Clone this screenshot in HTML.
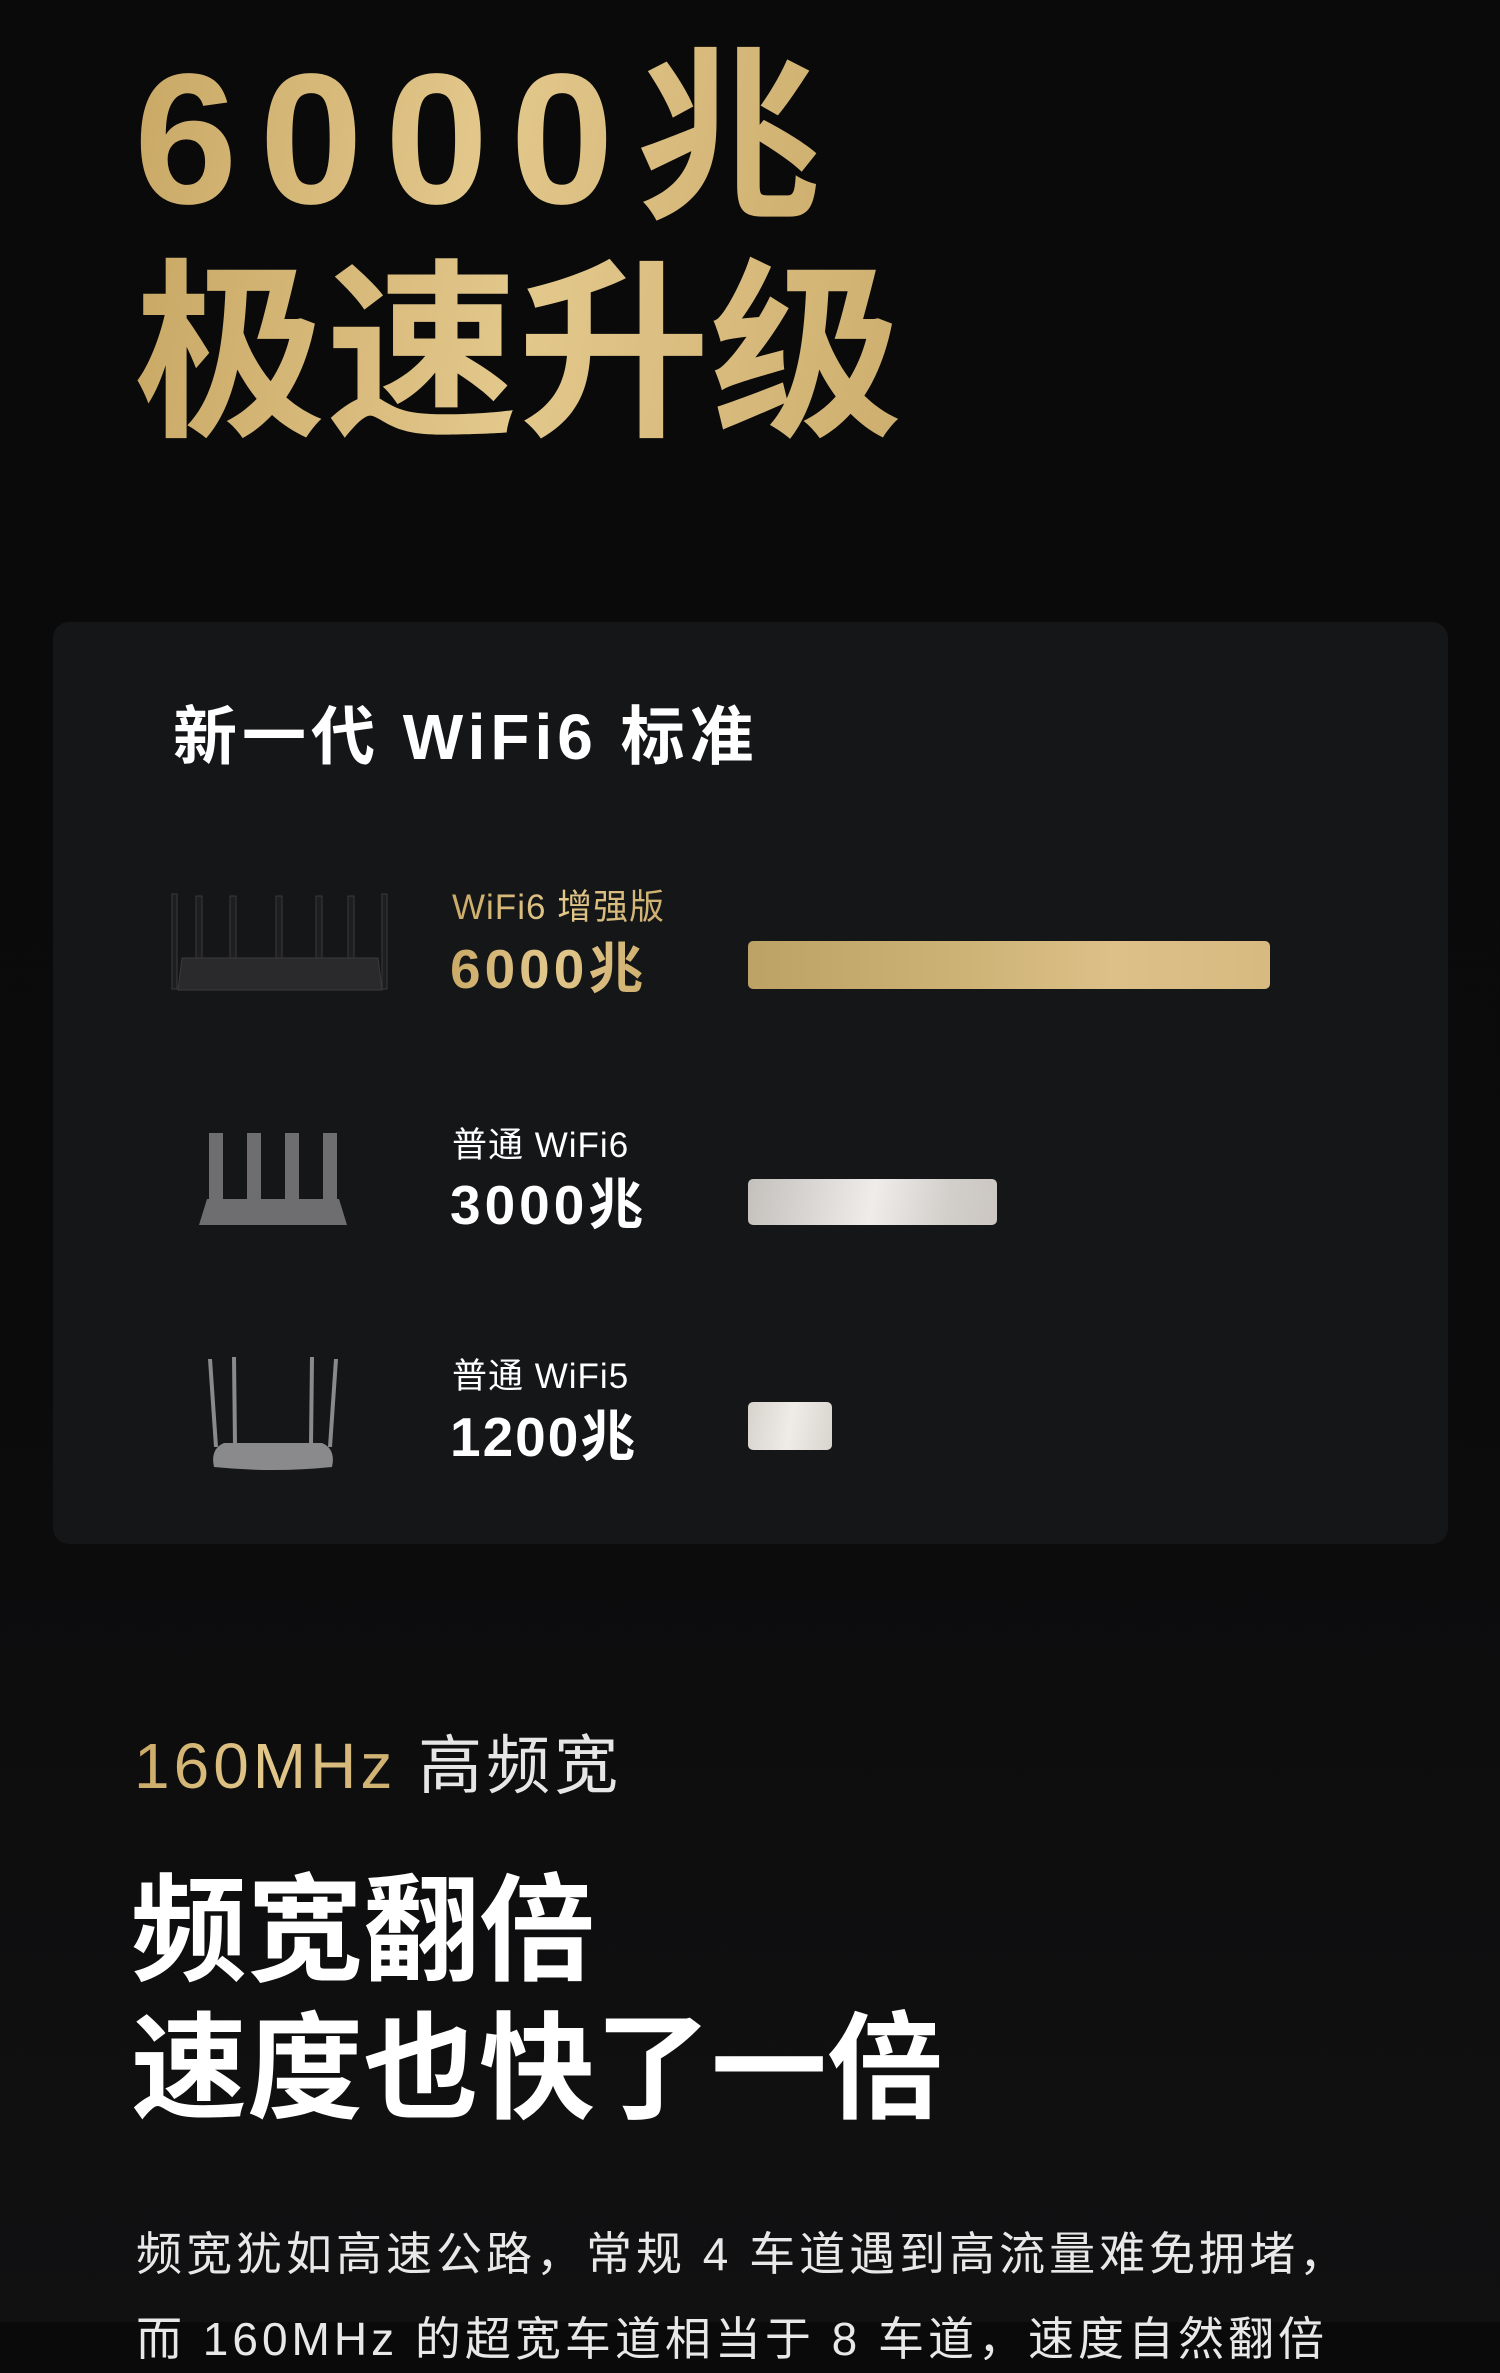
<!DOCTYPE html>
<html><head><meta charset="utf-8"><style>
*{margin:0;padding:0;box-sizing:border-box}
body{width:1500px;height:2322px;background:linear-gradient(180deg,#0a0a0a 0%,#0b0b0c 60%,#111112 100%);overflow:hidden;position:relative;font-family:"Liberation Sans","Noto Sans CJK SC",sans-serif}
.a{position:absolute;white-space:nowrap}
.gold{background:linear-gradient(100deg,#c9a865,#e3c88c 50%,#cdae6e);-webkit-background-clip:text;background-clip:text;color:transparent}
.card{position:absolute;left:53px;top:622px;width:1395px;height:922px;background:#151618;border-radius:16px}
.bar{position:absolute;border-radius:5px}
</style></head><body>
<div class="a gold" style="left:134px;top:40px;font-size:186px;font-weight:bold;line-height:200px;letter-spacing:22px">6000兆</div>
<div class="a gold" style="left:134px;top:250px;font-size:192px;font-weight:bold;line-height:210px">极速升级</div>
<div class="card"></div>
<div class="a" style="left:173px;top:697px;font-size:64px;font-weight:bold;color:#fff;line-height:80px;letter-spacing:5px">新一代 WiFi6 标准</div>

<svg class="a" style="left:168px;top:892px" width="224" height="104" viewBox="0 0 224 104">
<g fill="#1e1e20" stroke="#3a3a3c" stroke-width="1">
<rect x="4" y="2" width="5" height="95"/><rect x="28" y="4" width="6" height="64"/><rect x="62" y="4" width="6" height="64"/><rect x="108" y="4" width="6" height="64"/><rect x="148" y="4" width="6" height="64"/><rect x="180" y="4" width="6" height="64"/><rect x="214" y="2" width="5" height="95"/>
<path d="M14 66 L210 66 L214 98 L10 98 Z" fill="#2a2a2c"/>
</g></svg>
<div class="a gold" style="left:452px;top:884px;font-size:35px;line-height:48px;letter-spacing:1px">WiFi6 增强版</div>
<div class="a gold" style="left:450px;top:936px;font-size:55px;font-weight:bold;line-height:66px;letter-spacing:4px">6000兆</div>
<div class="bar" style="left:748px;top:941px;width:522px;height:48px;background:linear-gradient(90deg,#bda266,#cdb275 40%,#dcc088 70%,#d6ba80)"></div>

<svg class="a" style="left:197px;top:1133px" width="152" height="92" viewBox="0 0 152 92">
<g fill="#6e6e70"><rect x="12" y="0" width="14" height="72"/><rect x="50" y="0" width="14" height="72"/><rect x="88" y="0" width="14" height="72"/><rect x="126" y="0" width="14" height="72"/><path d="M10 66 L142 66 L150 92 L2 92 Z"/></g></svg>
<div class="a" style="left:452px;top:1122px;font-size:35px;color:#fff;line-height:48px;letter-spacing:1px">普通 WiFi6</div>
<div class="a" style="left:450px;top:1172px;font-size:55px;font-weight:bold;color:#fff;line-height:66px;letter-spacing:4px">3000兆</div>
<div class="bar" style="left:748px;top:1179px;width:249px;height:46px;background:linear-gradient(100deg,#c4c0bc,#d9d5d2 25%,#efecea 50%,#d2ceca 80%,#cbc6c2)"></div>

<svg class="a" style="left:206px;top:1355px" width="134" height="116" viewBox="0 0 134 116">
<g fill="#8a8a8c"><path d="M2 4 L6 4 L12 92 L8 92 Z"/><path d="M26 2 L30 2 L31 90 L27 90 Z"/><path d="M104 2 L108 2 L107 90 L103 90 Z"/><path d="M128 4 L132 4 L126 92 L122 92 Z"/><path d="M8 112 Q4 94 18 88 L116 88 Q130 94 126 112 Q67 118 8 112 Z"/></g></svg>
<div class="a" style="left:452px;top:1353px;font-size:35px;color:#fff;line-height:48px;letter-spacing:1px">普通 WiFi5</div>
<div class="a" style="left:450px;top:1404px;font-size:55px;font-weight:bold;color:#fff;line-height:66px;letter-spacing:2px">1200兆</div>
<div class="bar" style="left:748px;top:1402px;width:84px;height:48px;background:linear-gradient(100deg,#d6d2cc,#efece8 50%,#d8d4ce)"></div>

<div class="a" style="left:134px;top:1726px;font-size:64px;line-height:80px;color:#e6e6e6;letter-spacing:4px"><span class="gold">160MHz</span> 高频宽</div>
<div class="a" style="left:131px;top:1862px;font-size:116px;font-weight:bold;color:#fff;line-height:138px">频宽翻倍</div>
<div class="a" style="left:131px;top:2000px;font-size:116px;font-weight:bold;color:#fff;line-height:138px">速度也快了一倍</div>
<div class="a" style="left:136px;top:2220px;font-size:46px;color:#e8e8e8;line-height:68px;letter-spacing:4px">频宽犹如高速公路，常规 4 车道遇到高流量难免拥堵，</div>
<div class="a" style="left:136px;top:2305px;font-size:46px;color:#e8e8e8;line-height:68px;letter-spacing:4px">而 160MHz 的超宽车道相当于 8 车道，速度自然翻倍</div>
</body></html>
